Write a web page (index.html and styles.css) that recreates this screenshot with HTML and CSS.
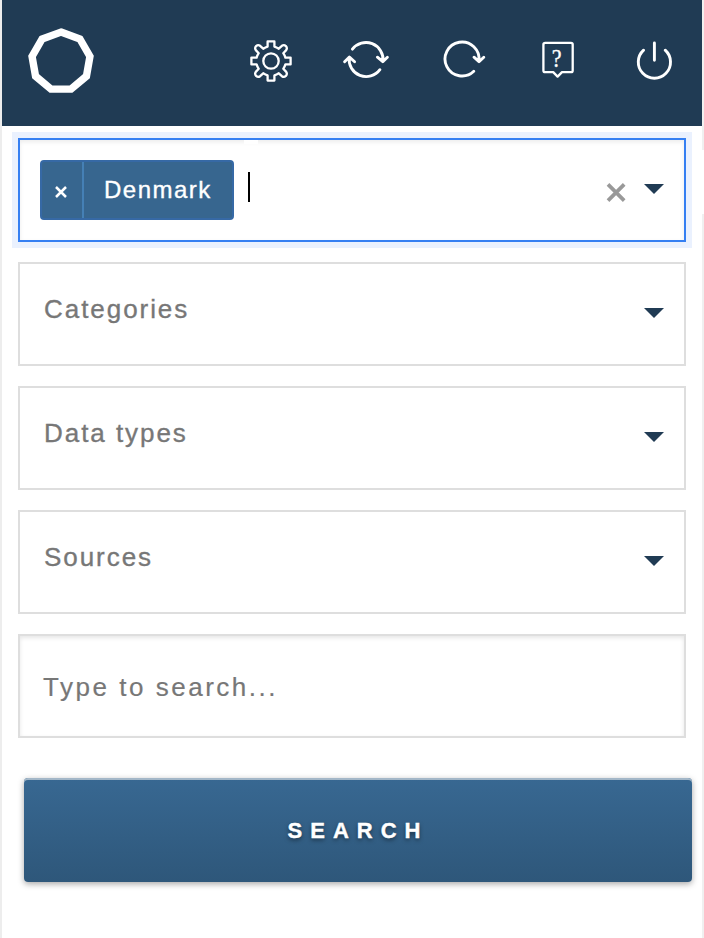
FILE: index.html
```html
<!DOCTYPE html>
<html lang="en">
<head>
<meta charset="utf-8">
<title>Search</title>
<link rel="stylesheet" href="styles.css">
</head>
<body>
<div class="panel">
  <header class="header">
    <svg class="logo" viewBox="26 26 70 70"><polygon points="61,32.1 79.9,39 89.95,56.4 86.45,76.2 71.05,89.1 50.95,89.1 35.55,76.2 32.05,56.4 42.1,39"/></svg>
    <nav class="tools">
      <svg class="icon" viewBox="-24 -24 48 48"><circle r="7.7"/><path d="M-3.4-19.6H3.4V-14.4Q5.5-13.8 7.8-12.3L10.9-15.2Q13-16.6 14.9-14.9Q16.6-13 15.2-10.9L12.3-7.8Q13.8-5.5 14.4-3.4H19.6V3.4H14.4Q13.8 5.5 12.3 7.8L15.2 10.9Q16.6 13 14.9 14.9Q13 16.6 10.9 15.2L7.8 12.3Q5.5 13.8 3.4 14.4V19.6H-3.4V14.4Q-5.5 13.8-7.8 12.3L-10.9 15.2Q-13 16.6-14.9 14.9Q-16.6 13-15.2 10.9L-12.3 7.8Q-13.8 5.5-14.4 3.4H-19.6V-3.4H-14.4Q-13.8-5.5-12.3-7.8L-15.2-10.9Q-16.6-13-14.9-14.9Q-13-16.6-10.9-15.2L-7.8-12.3Q-5.5-13.8-3.4-14.4Z"/></svg>
      <svg class="icon bold" viewBox="342 37 48 48"><path d="M352.4 49.2A17.1 17.1 0 0 1 383 61.2M377.4 57.2L382.8 61.7L387.4 57.2M379.9 69.7A17.1 17.1 0 0 1 349.2 57.5M344.6 61.8L349.4 57L354.6 61.8"/></svg>
      <svg class="icon bold" viewBox="440 37 48 48"><path d="M473.8 71.3A17 17 0 1 1 478.9 61.2M474 57.2L479 61.7L483.8 57.2"/></svg>
      <svg class="icon" viewBox="534 37 48 48"><path d="M545.3 42.9H571Q572.7 42.9 572.7 44.6V70.4Q572.7 72.1 571 72.1H562L557.6 76.6L553.2 72.1H545.3Q543.4 72.1 543.4 70.4V44.6Q543.4 42.9 545.3 42.9Z"/><g transform="translate(556.7 67) scale(.92 1.04)"><text class="question">?</text></g></svg>
      <svg class="icon bold" viewBox="630 37 48 48"><path d="M643.6 50.2A16.1 16.1 0 1 0 665.2 50.2M654.4 42.9V60.3"/></svg>
    </nav>
  </header>
  <main class="form">
    <div class="field focused">
      <div class="tag"><span class="remove"><svg class="remove-icon" viewBox="0 0 12 12"><path d="M1 1L11 11M11 1L1 11"/></svg></span><span class="label">Denmark</span></div>
      <span class="caret"></span>
      <svg class="clear" viewBox="0 0 20 20"><path d="M2 2.4L18.2 18.6M18.2 2.4L2 18.6"/></svg>
      <span class="arrow"></span>
    </div>
    <div class="field"><span class="placeholder">Categories</span><span class="arrow"></span></div>
    <div class="field"><span class="placeholder">Data types</span><span class="arrow"></span></div>
    <div class="field"><span class="placeholder">Sources</span><span class="arrow"></span></div>
    <div class="field query"><span class="placeholder">Type to search...</span></div>
    <button class="submit">SEARCH</button>
  </main>
</div>
</body>
</html>
```
FILE: styles.css
```css
* { box-sizing: border-box; }
body { margin: 0; background: #fff; font-family: "Liberation Sans", Arial, sans-serif; }
.panel {
  position: relative;
  height: 938px;
  border-left: 2px solid #ededed;
  border-right: 2px solid #f0f0f0;
}
.panel::after {
  content: "";
  position: absolute;
  top: 150px;
  right: -2px;
  width: 2px;
  height: 64px;
  background: #fff;
}
.header {
  display: flex;
  justify-content: space-between;
  height: 126px;
  padding: 26px 24px 0;
  background: #203b54;
}
.logo { width: 70px; height: 70px; fill: none; stroke: #fff; stroke-width: 7.4; }
.tools { display: flex; padding-top: 11px; }
.icon { width: 48px; height: 48px; fill: none; stroke: #fff; stroke-width: 2.3; stroke-linejoin: round; stroke-linecap: round; }
.icon + .icon { margin-left: 47px; }
.icon:nth-child(3) { margin-left: 50px; }
.icon:nth-child(4) { margin-left: 46px; }
.icon:nth-child(5) { margin-left: 48px; }
.icon.bold { stroke-width: 2.9; }
.question { fill: #fff; stroke: #fff; stroke-width: .3; font: 24px "Liberation Serif", serif; text-anchor: middle; }
.form { display: flex; flex-direction: column; gap: 20px; padding: 12px 16px 0; }
.field {
  display: flex;
  height: 104px;
  border: 2px solid #dedede;
  padding: 0 20px 0 24px;
  background: #fff;
}
.placeholder { flex: 1; padding-top: 30px; font-size: 26px; line-height: 30px; letter-spacing: 1.95px; color: #777; -webkit-text-stroke: .35px #777; }
.arrow { width: 20px; height: 10px; margin-top: 44px; background: #203b54; clip-path: polygon(0 0, 100% 0, 50% 100%); }
.focused {
  position: relative;
  padding-left: 20px;
  border-color: #357ff2;
  box-shadow: 0 0 0 6px #eaf1fe, inset 0 2px 4px rgba(0, 0, 0, .08);
}
.focused::after {
  content: "";
  position: absolute;
  left: 224px;
  top: 0;
  width: 14px;
  height: 4px;
  background: #fff;
}
.tag {
  display: flex;
  width: 194px;
  height: 60px;
  margin-top: 20px;
  border: 2px solid #3669a5;
  border-radius: 4px;
  background: #37668f;
  color: #fff;
}
.remove { width: 42px; border-right: 2px solid #4580b5; padding: 24px 0 0 13px; }
.remove-icon { display: block; width: 12px; height: 12px; fill: none; stroke: #fff; stroke-width: 2.5; }
.label { padding-left: 20px; font-size: 24px; line-height: 56px; letter-spacing: 1.5px; -webkit-text-stroke: .35px #fff; }
.caret { width: 2px; height: 30px; margin: 32px 0 0 14px; background: #000; }
.clear { width: 20px; height: 20px; margin: 42px 18px 0 auto; fill: none; stroke: #999; stroke-width: 3.7; }
.query { padding-left: 23px; box-shadow: inset 0 2px 4px rgba(0, 0, 0, .1); }
.query .placeholder { padding-top: 36px; letter-spacing: 2.52px; -webkit-text-stroke: .2px #777; }
.submit {
  width: 668px;
  height: 104px;
  margin: 20px 0 0 6px;
  padding: 2px 0 0;
  border: 0;
  border-radius: 4px;
  background: linear-gradient(#386892, #2e577a);
  box-shadow: inset 0 2px #a3b7c8, 0 2px 6px rgba(0, 0, 0, .35);
  color: #fff;
  font: bold 22px/102px "Liberation Sans", Arial, sans-serif;
  letter-spacing: 8px;
  text-shadow: 0 2px 4px rgba(0, 0, 0, .5);
  -webkit-text-stroke: .4px #fff;
}
```
